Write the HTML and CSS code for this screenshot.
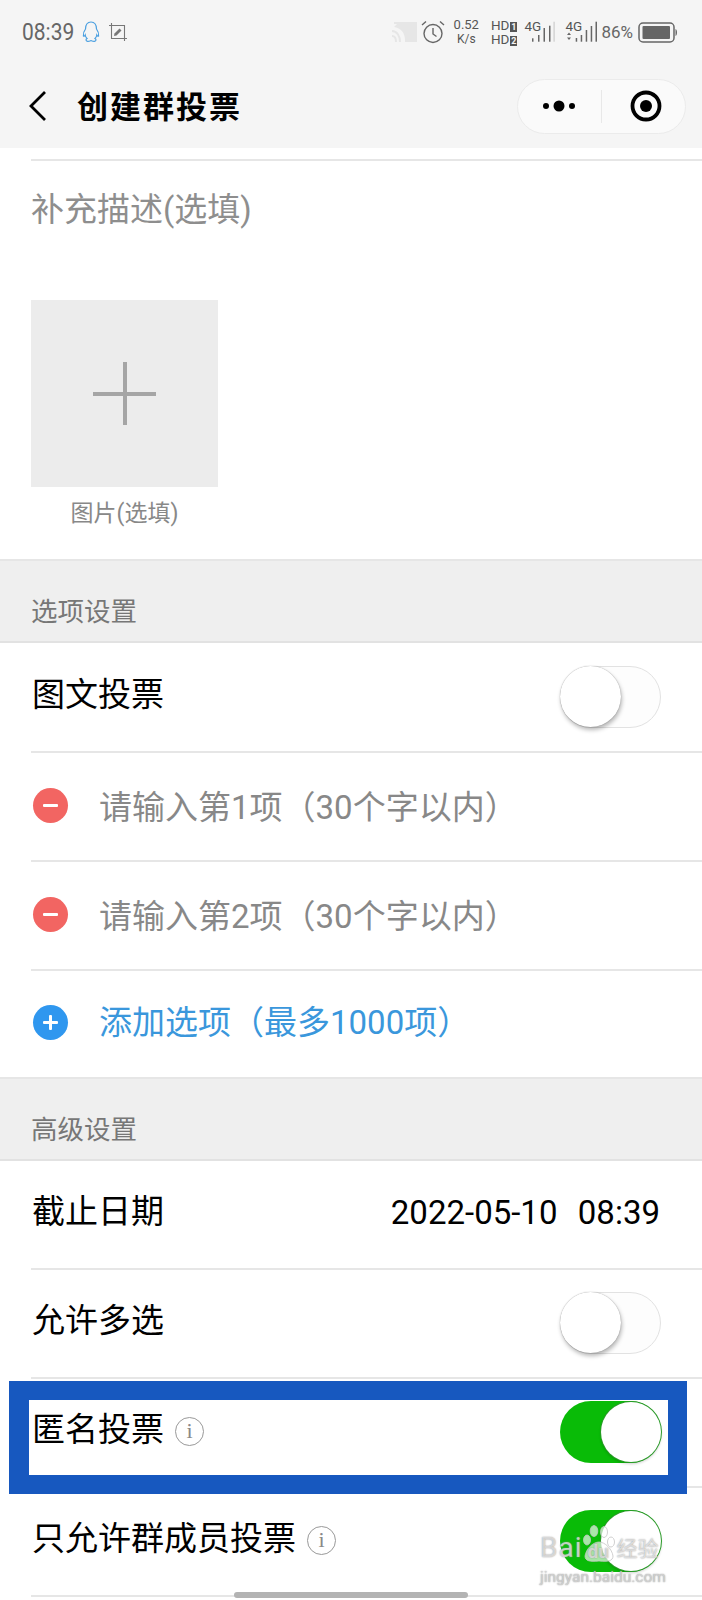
FILE: index.html
```html
<!DOCTYPE html>
<html lang="zh-CN">
<head>
  <meta charset="UTF-8" />
  <meta name="viewport" content="width=device-width, initial-scale=1.0"/>
  <title>创建群投票</title>
  <link rel="stylesheet" href="styles.css">
</head>
<body>
  <div class="phone">
    <header class="top">
      <div class="status">
        <div class="status-left">
          <span class="clock">08:39</span>
          <!-- qq penguin -->
          <svg class="qq" width="20" height="22" viewBox="0 0 20 22" fill="none" stroke="#4a9fe0" stroke-width="1.2">
            <path d="M10 1C6 1 4.6 4 4.5 8C3 10 2 12.5 2.400 15C3 15.600 3.800 14.800 4.200 14C4.400 15.600 5 16.600 6 17.400C4.800 18 4.400 20.200 6.600 20.400C8 20.500 9 20 10 19.600C11 20 12 20.500 13.400 20.400C15.600 20.200 15.200 18 14 17.400C15 16.600 15.600 15.600 15.800 14C16.200 14.800 17 15.600 17.600 15C18 12.500 17 10 15.500 8C15.400 4 14 1 10 1Z"/>
          </svg>
          <!-- screenshot edit mark -->
          <svg class="crop" width="18" height="18" viewBox="0 0 18 18" fill="none" stroke="#777" stroke-width="1.1">
            <path d="M2.500 0V15.500H18M0 2.500H15.500V18"/>
            <path d="M5 13L5.500 10.500L10.500 5.500L12.500 7.500L7.500 12.500Z" fill="#777" stroke="none"/>
          </svg>
        </div>
        <div class="status-right">
          <!-- cast -->
          <svg class="cast" width="26" height="22" viewBox="0 0 26 22" fill="none" stroke="#e6e6e6" stroke-width="2">
            <path d="M3 2H25V20H14"/>
            <path d="M6 3H24V19H14C14 12 10 7 3 6Z" fill="#e6e6e6" stroke="none"/>
            <path d="M1 10C6 10 9 15 9 21M1 15C4 15 5 18 5 21"/>
          </svg>
          <!-- alarm -->
          <svg class="alarm" width="24" height="24" viewBox="0 0 24 24" fill="none" stroke="#666" stroke-width="1.4">
            <circle cx="12" cy="13.500" r="9"/>
            <path d="M12 8V14L15.500 16.500M1 5L5 1.500M23 5L19 1.500"/>
          </svg>
          <div class="speed"><span>0.52</span><span class="speed-unit">K/s</span></div>
          <div class="hd">
            <span>HD<b>1</b></span>
            <span>HD<b>2</b></span>
          </div>
          <div class="net">
            <span class="net-label">4G</span>
            <svg width="32" height="24" viewBox="0 0 32 24" fill="#666">
              <rect x="8" y="18.300" width="1.500" height="3.400"/><rect x="14" y="15" width="1.500" height="6.700"/><rect x="19.500" y="8" width="1.500" height="13.700"/><rect x="25" y="5.700" width="1.500" height="16"/><rect x="29.500" y="1.700" width="1.200" height="20" fill="#ccc"/>
            </svg>
          </div>
          <div class="net net-data">
            <span class="net-label">4G</span>
            <svg width="32" height="24" viewBox="0 0 32 24" fill="#666">
              <path d="M2 15L4 12.500L6 15ZM2 17.500L4 20L6 17.500Z"/>
              <rect x="10.700" y="18" width="1.500" height="3.700"/><rect x="15.700" y="15" width="1.500" height="6.700"/><rect x="20.700" y="10" width="1.500" height="11.700"/><rect x="25.700" y="6" width="1.500" height="15.700"/><rect x="30.500" y="1.700" width="1.500" height="20"/>
            </svg>
          </div>
          <span class="battery-pct">86%</span>
          <svg class="battery" width="40" height="21" viewBox="0 0 40 21">
            <rect x="1" y="1" width="35" height="19" rx="4" fill="none" stroke="#666" stroke-width="1.500"/>
            <rect x="4.500" y="4" width="27.500" height="13" rx="1" fill="#666"/>
            <path d="M37.500 7C39.500 7.500 39.500 13.500 37.500 14Z" fill="#666"/>
          </svg>
        </div>
      </div>
      <div class="navbar">
        <svg class="back" width="20" height="32" viewBox="0 0 20 32" fill="none" stroke="#000" stroke-width="2.800">
          <path d="M18 2L4 16L18 30"/>
        </svg>
        <h1 class="title">创建群投票</h1>
        <div class="capsule">
          <svg class="capsule-more" width="36" height="12" viewBox="0 0 36 12" fill="#000">
            <circle cx="5" cy="6" r="3"/><circle cx="18" cy="6" r="5.500"/><circle cx="31" cy="6" r="3"/>
          </svg>
          <span class="capsule-line"></span>
          <svg class="capsule-close" width="32" height="32" viewBox="0 0 32 32">
            <circle cx="16" cy="16" r="13.500" fill="none" stroke="#000" stroke-width="3.800"/>
            <circle cx="16" cy="16" r="6" fill="#000"/>
          </svg>
        </div>
      </div>
    </header>

    <section class="intro">
      <div class="intro-line"></div>
      <p class="desc">补充描述(选填)</p>
      <div class="picker">
        <div class="picker-box"><span class="plus"></span></div>
        <div class="picker-label">图片(选填)</div>
      </div>
    </section>

    <div class="section-head">选项设置</div>
    <ul class="list list-options">
      <li class="row">
        <span class="label">图文投票</span>
        <span class="switch"></span>
      </li>
      <li class="row">
        <span class="dot dot-red"></span>
        <span class="option">请输入第1项（30个字以内）</span>
      </li>
      <li class="row">
        <span class="dot dot-red"></span>
        <span class="option">请输入第2项（30个字以内）</span>
      </li>
      <li class="row row-last">
        <span class="dot dot-blue"></span>
        <span class="option option-add">添加选项（最多1000项）</span>
      </li>
    </ul>

    <div class="section-head">高级设置</div>
    <ul class="list">
      <li class="row">
        <span class="label">截止日期</span>
        <span class="date">2022-05-10&nbsp;&nbsp;08:39</span>
      </li>
      <li class="row">
        <span class="label">允许多选</span>
        <span class="switch"></span>
      </li>
      <li class="row">
        <span class="label">匿名投票</span>
        <span class="info">i</span>
        <span class="switch switch-on"></span>
      </li>
      <li class="row">
        <span class="label">只允许群成员投票</span>
        <span class="info">i</span>
        <span class="switch switch-on"></span>
      </li>
    </ul>

    <!-- blue annotation frame around the anonymous row -->
    <div class="mark"></div>

    <div class="watermark">
      <div class="wm-top">
        <span class="wm-bai">Bai</span>
        <span class="wm-paw">
          <svg width="34" height="38" viewBox="0 0 34 38" fill="rgba(255,255,255,0.65)" stroke="#c4c4c4" stroke-width="0.8">
            <ellipse cx="5" cy="15" rx="3.500" ry="5"/>
            <ellipse cx="12" cy="6" rx="3.800" ry="5.500"/>
            <ellipse cx="22" cy="7" rx="3.500" ry="5.500"/>
            <ellipse cx="29" cy="17" rx="3.500" ry="5"/>
            <path d="M17 17C11 17 4 24 3 31C3 36 8 37 17 36C26 37 31 36 31 31C30 24 23 17 17 17Z"/>
          </svg>
          <span class="wm-du">du</span>
        </span>
        <span class="wm-jy">经验</span>
      </div>
      <div class="wm-url">jingyan.baidu.com</div>
    </div>
    <div class="home-bar"></div>
  </div>
</body>
</html>
```

FILE: styles.css
```css
* {
  box-sizing: border-box;
}

body {
  margin: 0;
  background: #fff;
  color: #000;
  font-family: "Roboto", "Noto Sans CJK SC", sans-serif;
}

.phone {
  position: relative;
  width: 702px;
  height: 1600px;
  overflow: hidden;
}

.top {
  height: 148px;
  background: #f5f5f5;
}

/* status bar */
.status {
  display: flex;
  justify-content: space-between;
  align-items: center;
  height: 64px;
  padding: 0 24px 0 22px;
}

.status-left,
.status-right {
  display: flex;
  align-items: center;
}

.clock {
  font-size: 21px;
  color: #666;
  transform: scaleY(1.15);
}

.qq {
  margin-left: 7px;
}

.crop {
  margin-left: 8px;
}

.cast {
  margin-right: 4px;
}

.alarm {
  margin-right: 9px;
}

.speed {
  display: flex;
  flex-direction: column;
  align-items: center;
  font-size: 13px;
  line-height: 14px;
  color: #555;
  margin-right: 12px;
}

.speed-unit {
  font-size: 12px;
}

.hd {
  display: flex;
  flex-direction: column;
  font-size: 13.500px;
  line-height: 14px;
  color: #555;
  margin-right: 7px;
}

.hd b {
  display: inline-block;
  width: 7px;
  height: 10px;
  margin-left: 1px;
  background: #555;
  color: #f5f5f5;
  font-size: 9px;
  line-height: 10px;
  text-align: center;
}

.net {
  position: relative;
  width: 32px;
  height: 24px;
  margin-right: 9px;
}

.net-data {
  margin-right: 4px;
}

.net svg {
  display: block;
}

.net-label {
  position: absolute;
  left: 0;
  top: 0;
  font-size: 13.500px;
  line-height: 13px;
  color: #555;
}

.battery-pct {
  font-size: 17px;
  color: #666;
  margin-right: 5px;
}

/* title bar */
.navbar {
  display: flex;
  align-items: center;
  height: 84px;
  padding: 0 16px 0 27px;
}

.title {
  flex: 1;
  margin: 2px 0 0 30px;
  font-size: 31px;
  font-weight: 700;
  letter-spacing: 2px;
  line-height: 1;
}

.capsule {
  display: flex;
  align-items: center;
  width: 169px;
  height: 55px;
  border: 1px solid #ebebeb;
  border-radius: 28px;
  background: #fafafa;
}

.capsule-more {
  margin-left: 23px;
}

.capsule-line {
  width: 1px;
  height: 33px;
  margin-left: 24px;
  background: #e8e8e8;
}

.capsule-close {
  margin-left: 28px;
}

/* description and picture */
.intro {
  height: 411px;
  padding-top: 11px;
}

.intro-line {
  height: 2px;
  margin-left: 31px;
  background: #e6e6e6;
}

.desc {
  margin: 0;
  padding: 27px 0 0 31px;
  font-size: 33px;
  line-height: 44px;
  color: #8e8e8e;
}

.picker {
  width: 187px;
  margin: 68px 0 0 31px;
}

.picker-box {
  display: flex;
  align-items: center;
  justify-content: center;
  height: 187px;
  background: #ececec;
}

.plus {
  position: relative;
  display: block;
  width: 63px;
  height: 63px;
}

.plus::before,
.plus::after {
  content: "";
  position: absolute;
  background: #a5a5a5;
}

.plus::before {
  left: 0;
  right: 0;
  top: 29.500px;
  height: 4px;
}

.plus::after {
  top: 0;
  bottom: 0;
  left: 29.500px;
  width: 4px;
}

.picker-label {
  margin-top: 12px;
  font-size: 23px;
  line-height: 30px;
  text-align: center;
  color: #888;
}

/* grey section headings */
.section-head {
  height: 84px;
  padding: 33px 0 0 31px;
  background: #efefef;
  border-top: 2px solid #e6e6e6;
  border-bottom: 2px solid #e2e2e2;
  font-size: 26.500px;
  line-height: 36px;
  color: #777;
}

.list {
  margin: 0;
  padding: 0;
  list-style: none;
}

.list-options {
  margin-top: 1px;
}

.row {
  position: relative;
  display: flex;
  align-items: center;
  height: 109px;
  padding: 0 41px 4px 32px;
}

.row::after {
  content: "";
  position: absolute;
  left: 31px;
  right: 0;
  bottom: 0;
  height: 2px;
  background: #e6e6e6;
}

.row-last {
  height: 106px;
}

.row-last::after {
  display: none;
}

.label {
  margin-bottom: 3px;
  font-size: 33px;
  line-height: 44px;
}

.option {
  margin: 4px 0 0 31px;
  font-size: 33px;
  line-height: 44px;
  color: #888;
}

.option-add {
  margin-top: 2px;
  color: #3a97dc;
}

.date {
  margin-left: auto;
  margin-right: 1px;
  margin-bottom: 2px;
  font-size: 33px;
  line-height: 44px;
  word-spacing: 2px;
}

.dot {
  position: relative;
  flex: none;
  width: 35px;
  height: 35px;
  margin-left: 1px;
  border-radius: 50%;
}

.dot::before,
.dot::after {
  content: "";
  position: absolute;
  background: #fff;
  border-radius: 1px;
}

.dot::before {
  left: 10px;
  right: 10px;
  top: 16px;
  height: 3px;
}

.dot-red {
  background: #f26562;
}

.dot-red::after {
  display: none;
}

.dot-blue {
  background: #2f97ef;
}

.dot-blue::after {
  top: 10px;
  bottom: 10px;
  left: 16px;
  width: 3px;
}

.info {
  flex: none;
  width: 29px;
  height: 29px;
  margin-left: 11px;
  border: 1.500px solid #999;
  border-radius: 50%;
  font-family: "Liberation Serif", serif;
  font-size: 22px;
  line-height: 25px;
  text-align: center;
  color: #888;
}

/* toggle */
.switch {
  position: relative;
  flex: none;
  width: 101px;
  height: 62px;
  margin-left: auto;
  border: 1.500px solid #e2e2e2;
  border-radius: 31px;
  background: #fdfdfd;
}

.switch::after {
  content: "";
  position: absolute;
  left: -1px;
  top: -1px;
  width: 61px;
  height: 61px;
  border-radius: 50%;
  background: #fff;
  box-shadow: 0 0 1px rgba(0, 0, 0, 0.4), 1px 3px 4px rgba(0, 0, 0, 0.28);
}

.switch-on {
  border: 0;
  background: #09bb07;
}

.switch-on::after {
  left: 41px;
  top: 1px;
  width: 60px;
  height: 60px;
  box-shadow: 0 0 0 1px #2a9a28, 0 2px 3px rgba(0, 0, 0, 0.2);
}

.mark {
  position: absolute;
  left: 9px;
  top: 1381px;
  width: 678px;
  height: 113px;
  border: 19px solid #1758bf;
  border-left-width: 20px;
}

/* baidu watermark */
.watermark {
  position: absolute;
  left: 540px;
  top: 1525px;
  width: 126px;
  color: rgba(255, 255, 255, 0.6);
  text-shadow: 0 0 1.500px #888;
}

.wm-top {
  display: flex;
  align-items: flex-end;
  height: 38px;
}

.wm-bai {
  font-size: 28px;
  line-height: 30px;
  letter-spacing: 1px;
}

.wm-paw {
  position: relative;
  display: block;
  height: 38px;
}

.wm-du {
  position: absolute;
  left: 5px;
  bottom: 1px;
  font-size: 19px;
  line-height: 20px;
  font-weight: 700;
}

.wm-jy {
  font-size: 21px;
  line-height: 28px;
}

.wm-url {
  margin-top: 6px;
  font-size: 15.500px;
  line-height: 16px;
  white-space: nowrap;
  color: rgba(215, 215, 215, 0.8);
}

.home-bar {
  position: absolute;
  left: 234px;
  top: 1592px;
  width: 234px;
  height: 6px;
  border-radius: 3px;
  background: #b3b3b3;
}
```
